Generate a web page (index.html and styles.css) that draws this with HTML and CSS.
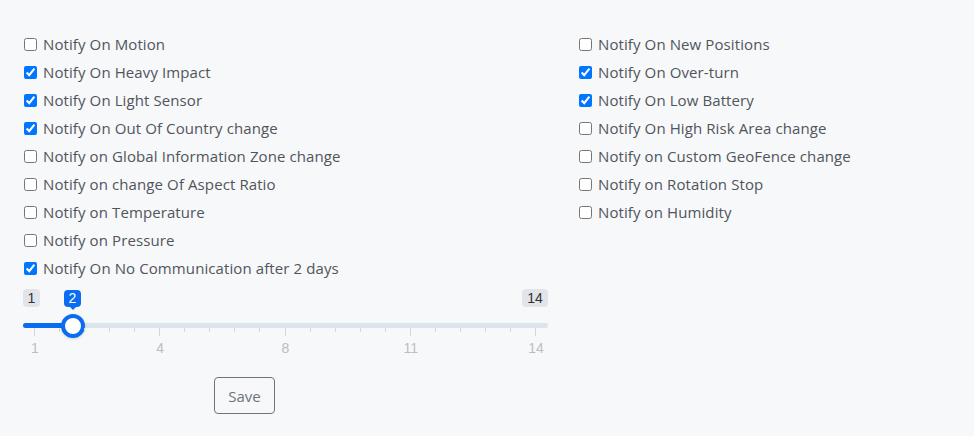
FILE: index.html
```html
<!DOCTYPE html>
<html>
<head>
<meta charset="utf-8">
<link rel="stylesheet" href="styles.css">
</head>
<body>
<div class="page">
  <div class="col">
    <label class="opt"><input type="checkbox"><span>Notify On Motion</span></label>
    <label class="opt"><input type="checkbox" checked><span>Notify On Heavy Impact</span></label>
    <label class="opt"><input type="checkbox" checked><span>Notify On Light Sensor</span></label>
    <label class="opt"><input type="checkbox" checked><span>Notify On Out Of Country change</span></label>
    <label class="opt"><input type="checkbox"><span>Notify on Global Information Zone change</span></label>
    <label class="opt"><input type="checkbox"><span>Notify on change Of Aspect Ratio</span></label>
    <label class="opt"><input type="checkbox"><span>Notify on Temperature</span></label>
    <label class="opt"><input type="checkbox"><span>Notify on Pressure</span></label>
    <label class="opt"><input type="checkbox" checked><span>Notify On No Communication after 2 days</span></label>

    <div class="irs">
      <span class="irs-min">1</span>
      <span class="irs-max">14</span>
      <span class="irs-from" style="left:41px">2</span>
      <span class="irs-line"></span>
      <span class="irs-bar" style="width:50px"></span>
      <span class="irs-handle" style="left:38px"></span>
      <div class="irs-grid">
        <span class="tick major" style="left:0%"></span>
        <span class="tick" style="left:5%"></span>
        <span class="tick" style="left:10%"></span>
        <span class="tick" style="left:15%"></span>
        <span class="tick" style="left:20%"></span>
        <span class="tick major" style="left:25%"></span>
        <span class="tick" style="left:30%"></span>
        <span class="tick" style="left:35%"></span>
        <span class="tick" style="left:40%"></span>
        <span class="tick" style="left:45%"></span>
        <span class="tick major" style="left:50%"></span>
        <span class="tick" style="left:55%"></span>
        <span class="tick" style="left:60%"></span>
        <span class="tick" style="left:65%"></span>
        <span class="tick" style="left:70%"></span>
        <span class="tick major" style="left:75%"></span>
        <span class="tick" style="left:80%"></span>
        <span class="tick" style="left:85%"></span>
        <span class="tick" style="left:90%"></span>
        <span class="tick" style="left:95%"></span>
        <span class="tick major" style="left:100%"></span>
        <span class="grid-text" style="left:0%">1</span>
        <span class="grid-text" style="left:25%">4</span>
        <span class="grid-text" style="left:50%">8</span>
        <span class="grid-text" style="left:75%">11</span>
        <span class="grid-text" style="left:100%">14</span>
      </div>
    </div>

    <div class="actions">
      <button class="btn">Save</button>
    </div>
  </div>
  <div class="col">
    <label class="opt"><input type="checkbox"><span>Notify On New Positions</span></label>
    <label class="opt"><input type="checkbox" checked><span>Notify On Over-turn</span></label>
    <label class="opt"><input type="checkbox" checked><span>Notify On Low Battery</span></label>
    <label class="opt"><input type="checkbox"><span>Notify On High Risk Area change</span></label>
    <label class="opt"><input type="checkbox"><span>Notify on Custom GeoFence change</span></label>
    <label class="opt"><input type="checkbox"><span>Notify on Rotation Stop</span></label>
    <label class="opt"><input type="checkbox"><span>Notify on Humidity</span></label>
  </div>
</div>
</body>
</html>
```

FILE: styles.css
```css
html, body {
  margin: 0;
  padding: 0;
  background: #f7f8fa;
  font-family: "Open Sans", "Liberation Sans", sans-serif;
  color: #50555b;
}
.page {
  display: grid;
  grid-template-columns: 525px 1fr;
  column-gap: 30px;
  padding: 30px 0 0 23px;
}
.col {
  display: flex;
  flex-direction: column;
}
.opt {
  display: flex;
  align-items: center;
  height: 28px;
  font-size: 15px;
  letter-spacing: 0.1px;
  white-space: nowrap;
}
.opt input {
  width: 13px;
  height: 13px;
  margin: 0 7px 0 1px;
  accent-color: #0075ff;
}
.opt span {
  margin-left: -1px;
}
.irs {
  position: relative;
  margin-top: 1px;
  height: 75px;
  width: 525px;
  font-family: "Liberation Sans", Arial, sans-serif;
}
.irs-min, .irs-max, .irs-from {
  position: absolute;
  top: 6px;
  height: 18px;
  line-height: 18px;
  font-size: 14px;
  text-align: center;
  border-radius: 4px;
}
.irs-min {
  left: 0;
  width: 17px;
  background: #e1e4e9;
  color: #333;
}
.irs-max {
  right: 0;
  width: 26px;
  background: #e1e4e9;
  color: #333;
}
.irs-from {
  top: 7px;
  height: 17px;
  line-height: 17px;
  width: 17px;
  background: #0b6cf2;
  color: #fff;
}
.irs-from::after {
  content: "";
  position: absolute;
  left: 50%;
  bottom: -3px;
  margin-left: -3px;
  border-left: 3px solid transparent;
  border-right: 3px solid transparent;
  border-top: 3px solid #0b6cf2;
}
.irs-line {
  position: absolute;
  top: 40px;
  left: 0;
  right: 0;
  height: 5px;
  border-radius: 3px;
  background: #dee4ec;
}
.irs-bar {
  position: absolute;
  top: 40px;
  left: 0;
  height: 5px;
  border-radius: 3px 0 0 3px;
  background: #0b6cf2;
}
.irs-handle {
  position: absolute;
  top: 31px;
  box-sizing: border-box;
  width: 24px;
  height: 24px;
  border-radius: 50%;
  border: 4px solid #0b6cf2;
  background: #fff;
  box-shadow: 0 1px 3px rgba(0, 0, 0, 0.15);
}
.irs-grid {
  position: absolute;
  top: 45px;
  left: 11px;
  width: 501px;
  height: 27px;
}
.tick {
  position: absolute;
  top: 0;
  width: 1px;
  height: 4px;
  background: #d3d8df;
}
.tick.major {
  height: 8px;
}
.grid-text {
  position: absolute;
  top: 12px;
  font-size: 14px;
  color: #bdbdbd;
  transform: translateX(-50%);
  margin-left: 1px;
}
.actions {
  padding: 19px 0 0 191px;
}
.btn {
  font-family: "Open Sans", "Liberation Sans", sans-serif;
  font-size: 15px;
  color: #6c757d;
  background: transparent;
  border: 1px solid #6c757d;
  border-radius: 4px;
  width: 61px;
  height: 37px;
  padding: 0;
}
```
